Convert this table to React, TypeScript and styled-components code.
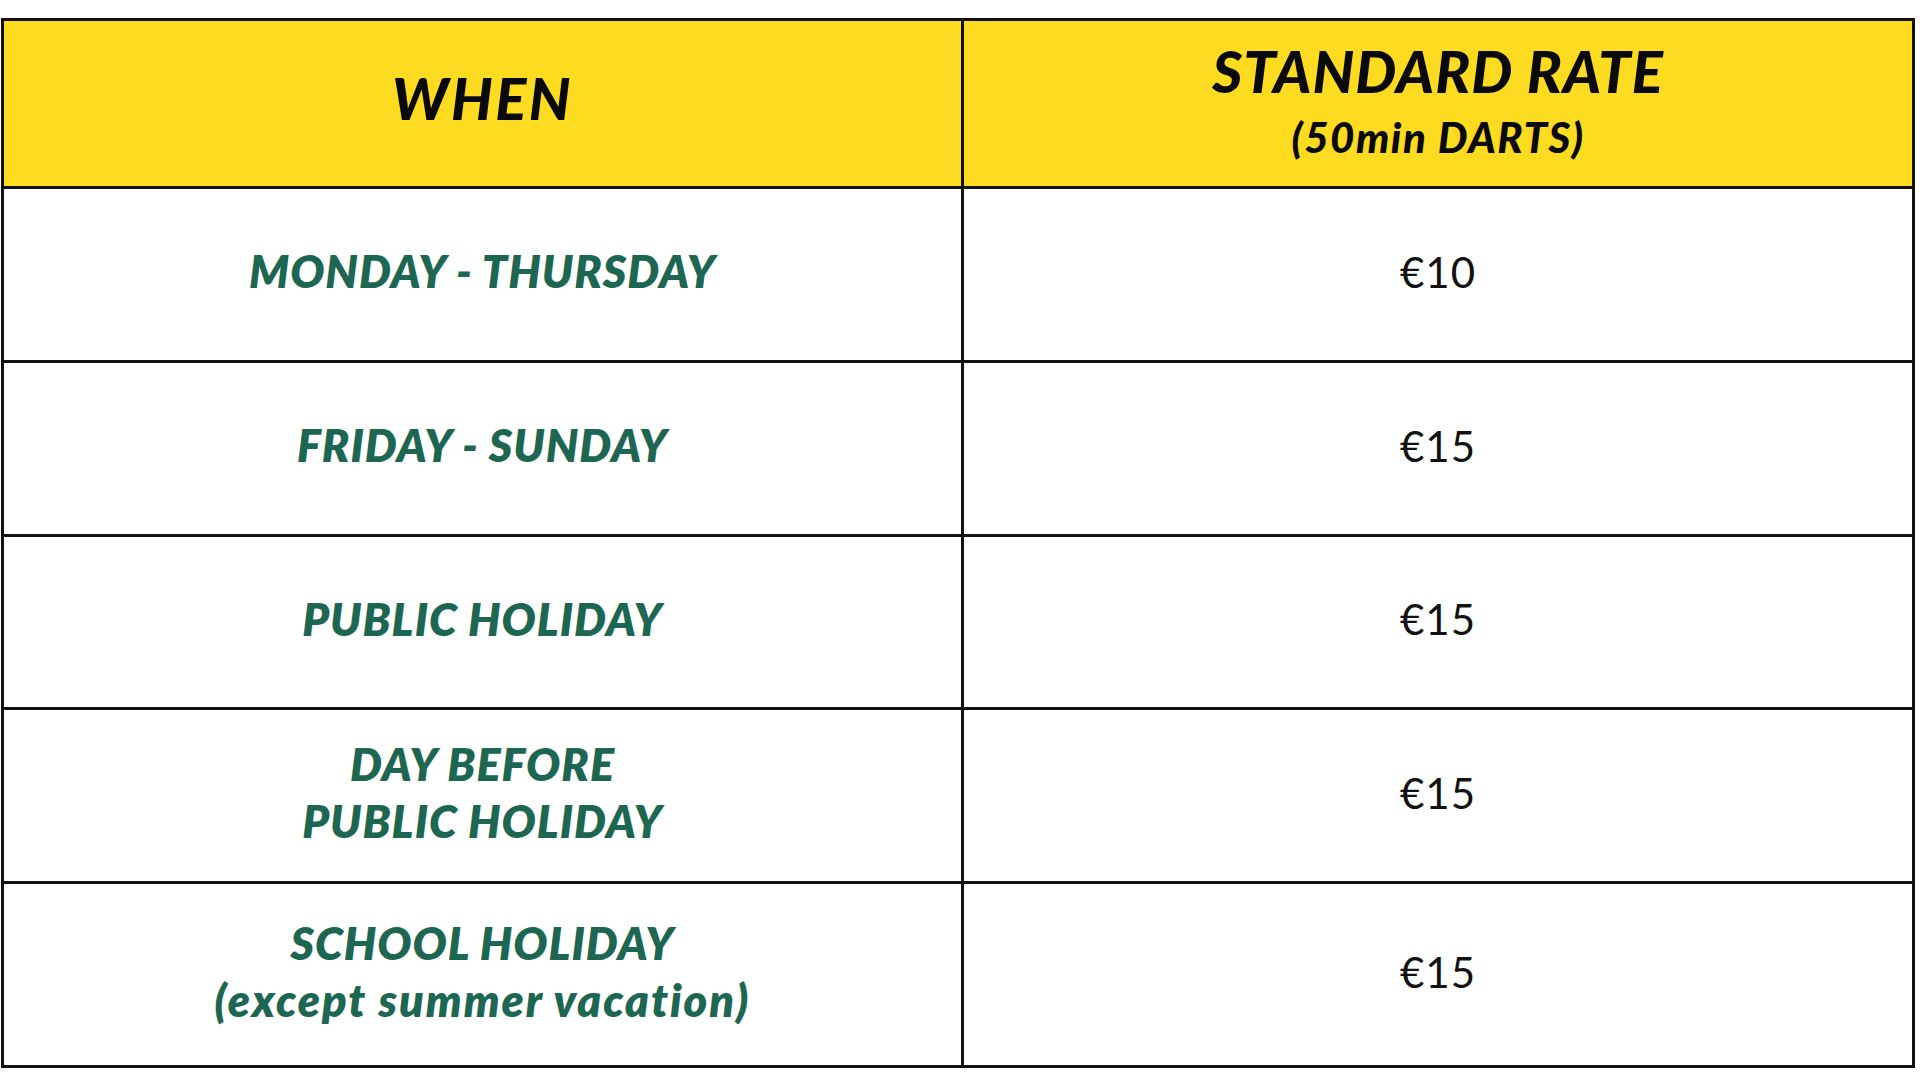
import styled, { createGlobalStyle } from "styled-components";

const GlobalStyle = createGlobalStyle`
  html, body {
    margin: 0;
    padding: 0;
    background: #ffffff;
  }
  body {
    font-family: "Lato", "Liberation Sans", sans-serif;
  }
`;

const rates = [
  { when: ["MONDAY - THURSDAY"], price: "€10", height: 174 },
  { when: ["FRIDAY - SUNDAY"], price: "€15", height: 174 },
  { when: ["PUBLIC HOLIDAY"], price: "€15", height: 173 },
  { when: ["DAY BEFORE", "PUBLIC HOLIDAY"], price: "€15", height: 174 },
  {
    when: ["SCHOOL HOLIDAY"],
    note: "(except summer vacation)",
    price: "€15",
    height: 184,
  },
];

const App = () => {
  return (
    <>
      <GlobalStyle />
      <Page>
        <RateTable>
          <colgroup>
            <col style={{ width: 960 }} />
            <col style={{ width: 951 }} />
          </colgroup>
          <thead>
            <HeadRow>
              <HeadCell>
                <HeadTitle $spacing={2.5}>WHEN</HeadTitle>
              </HeadCell>
              <HeadCell>
                <HeadTitle $spacing={1}>STANDARD RATE</HeadTitle>
                <HeadSub>(50min DARTS)</HeadSub>
              </HeadCell>
            </HeadRow>
          </thead>
          <tbody>
            {rates.map((r, i) => (
              <BodyRow key={i} $height={r.height}>
                <DayCell>
                  {r.when.map((line) => (
                    <DayLine key={line}>{line}</DayLine>
                  ))}
                  {r.note && <DayLine $note>{r.note}</DayLine>}
                </DayCell>
                <PriceCell>{r.price}</PriceCell>
              </BodyRow>
            ))}
          </tbody>
        </RateTable>
      </Page>
    </>
  );
};

const Page = styled.div`
  width: 1920px;
  height: 1080px;
  padding: 18px 0 0 1px;
  box-sizing: border-box;
  background: #ffffff;
`;
const RateTable = styled.table`
  width: 1913px;
  table-layout: fixed;
  border-collapse: collapse;
  border: 3px solid #111111;
`;
const HeadRow = styled.tr`
  height: 168px;
  background: #fddb20;
`;
const HeadCell = styled.th`
  border: 3px solid #111111;
  padding: 0 0 4px;
  text-align: center;
  vertical-align: middle;
  color: #0a0a0a;
  font-style: italic;
  font-weight: 900;
`;
const HeadTitle = styled.div<{ $spacing: number }>`
  font-size: 58px;
  line-height: 62px;
  letter-spacing: ${(p) => p.$spacing}px;
  margin-top: -8px;
`;
const HeadSub = styled.div`
  font-size: 42px;
  line-height: 54px;
  letter-spacing: 1.5px;
  margin: 8px 0 -8px;
`;
const BodyRow = styled.tr<{ $height: number }>`
  height: ${(p) => p.$height}px;
`;
const DayCell = styled.td`
  border: 3px solid #111111;
  padding: 0 0 6px;
  text-align: center;
  vertical-align: middle;
  color: #1d6652;
  font-style: italic;
  font-weight: 800;
  font-size: 45px;
`;
const DayLine = styled.div<{ $note?: boolean }>`
  line-height: 57px;
  letter-spacing: ${(p) => (p.$note ? 2 : 1)}px;
`;
const PriceCell = styled.td`
  border: 3px solid #111111;
  padding: 0 0 6px;
  text-align: center;
  vertical-align: middle;
  color: #111111;
  font-weight: 400;
  font-size: 42px;
  letter-spacing: 1px;
`;

export default App;
